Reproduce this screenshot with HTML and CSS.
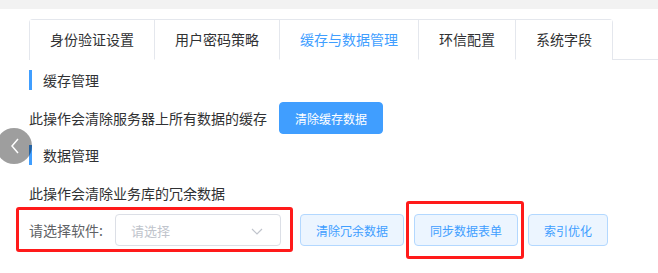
FILE: index.html
```html
<!DOCTYPE html>
<html lang="zh">
<head>
<meta charset="utf-8">
<link rel="stylesheet" href="styles.css">
</head>
<body>
<div class="topbar"></div>
<div class="main">
  <div class="tabs-header">
    <div class="tabs-nav">
      <div class="tab">身份验证设置</div>
      <div class="tab">用户密码策略</div>
      <div class="tab active">缓存与数据管理</div>
      <div class="tab">环信配置</div>
      <div class="tab">系统字段</div>
    </div>
  </div>

  <div class="sec-title first">缓存管理</div>
  <div class="row">
    <span class="desc">此操作会清除服务器上所有数据的缓存</span>
    <button class="btn primary">清除缓存数据</button>
  </div>

  <div class="sec-title second">数据管理</div>
  <div class="desc line">此操作会清除业务库的冗余数据</div>
  <div class="form-row">
    <span class="label">请选择软件:</span>
    <div class="select">
      <span class="placeholder">请选择</span>
      <svg class="arrow" width="12" height="7" viewBox="0 0 12 7"><path d="M1 1l5 5 5-5" fill="none" stroke="#c0c4cc" stroke-width="1.2"/></svg>
    </div>
    <div class="btns">
      <button class="btn plain">清除冗余数据</button>
      <button class="btn plain">同步数据表单</button>
      <button class="btn plain">索引优化</button>
    </div>
  </div>
</div>

<div class="back-btn">
  <svg width="12" height="18" viewBox="0 0 12 18"><path d="M9 2L3 9l6 7" fill="none" stroke="#fff" stroke-width="1.5"/></svg>
</div>
<div class="mark mark1"></div>
<div class="mark mark2"></div>
</body>
</html>
```

FILE: styles.css
```css
* { box-sizing: border-box; }
html, body {
  margin: 0;
  padding: 0;
  background: #fff;
  width: 658px;
  height: 273px;
  overflow: hidden;
  font-family: "Noto Sans CJK SC", "Microsoft YaHei", sans-serif;
  position: relative;
}
.topbar {
  height: 9px;
  background: #f2f2f2;
}
.main {
  padding: 10px 0 0 29px;
}
.tabs-header {
  border-bottom: 1px solid #e4e7ed;
  display: flex;
}
.tabs-nav {
  display: flex;
  border: 1px solid #e4e7ed;
  border-bottom: none;
  border-radius: 4px 4px 0 0;
  margin-bottom: -1px;
}
.tab {
  height: 40px;
  line-height: 39px;
  padding: 0 20px;
  font-size: 14px;
  color: #303133;
  border-left: 1px solid #e4e7ed;
  border-bottom: 1px solid transparent;
  background: #fff;
}
.tab:first-child { border-left: none; }
.tab.active {
  color: #409eff;
  border-bottom-color: #fff;
}
.sec-title {
  border-left: 3px solid #409eff;
  padding-left: 11px;
  height: 20px;
  line-height: 20px;
  font-size: 14px;
  color: #303133;
}
.sec-title.first { margin-top: 10px; }
.sec-title.second { margin-top: 11px; }
.row {
  margin-top: 12px;
  display: flex;
  align-items: center;
  gap: 12px;
  height: 32px;
}
.desc {
  font-size: 14px;
  color: #303133;
}
.desc.line {
  margin-top: 18px;
  line-height: 20px;
  height: 20px;
}
.btn {
  height: 32px;
  padding: 0 15px;
  font-size: 12px;
  font-family: inherit;
  border-radius: 4px;
  border: 1px solid transparent;
  cursor: pointer;
}
.btn.primary {
  background: #409eff;
  border-color: #409eff;
  color: #fff;
}
.btn.plain {
  background: #ecf5ff;
  border-color: #b3d8ff;
  color: #409eff;
}
.form-row {
  margin-top: 11px;
  display: flex;
  align-items: center;
  height: 32px;
}
.label {
  width: 86px;
  padding-right: 12px;
  font-size: 14px;
  color: #606266;
  white-space: nowrap;
}
.select {
  width: 166px;
  height: 32px;
  border: 1px solid #dcdfe6;
  border-radius: 4px;
  display: flex;
  align-items: center;
  justify-content: space-between;
  padding: 0 17px 0 15px;
}
.placeholder {
  font-size: 13px;
  color: #c0c4cc;
}
.arrow { display: block; margin-top: 2px; }
.btns {
  display: flex;
  gap: 10px;
  margin-left: 19px;
}
.back-btn {
  position: absolute;
  left: -4px;
  top: 128px;
  width: 36px;
  height: 36px;
  border-radius: 50%;
  background: rgba(0, 0, 0, 0.38);
  display: flex;
  align-items: center;
  justify-content: center;
  padding-left: 2px;
}
.mark {
  position: absolute;
  border: 3px solid #ff1a1a;
  border-radius: 3px;
}
.mark1 { left: 16px; top: 207px; width: 277px; height: 45px; }
.mark2 { left: 406px; top: 201px; width: 118px; height: 58px; }
```
